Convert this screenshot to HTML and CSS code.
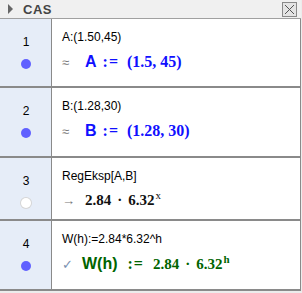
FILE: index.html
```html
<!DOCTYPE html>
<html lang="nb">
<head>
    <meta charset="utf-8">
    <link rel="stylesheet" href="styles.css">
</head>
<body>
<div class="view">
  <div class="titlebar">
    <span class="tri"></span>
    <span class="title">CAS</span>
    <span class="close">
      <svg width="15" height="15" viewBox="0 0 15 15"><rect x="0.5" y="0.5" width="14" height="14" fill="#e4e4e4" stroke="#8a8a8a"/><path d="M3 3L12 12M12 3L3 12" stroke="#555" stroke-width="1"/></svg>
    </span>
  </div>
  <div class="rows">
    <div class="row r1">
      <div class="head"><span class="num">1</span><span class="dot"></span></div>
      <div class="cell">
        <div class="input">A:(1.50,45)</div>
        <div class="output"><span class="sym">≈</span><span class="math blue"><span class="var">A</span><span class="def">:=</span>(1.5, 45)</span></div>
      </div>
    </div>
    <div class="row r2">
      <div class="head"><span class="num">2</span><span class="dot"></span></div>
      <div class="cell">
        <div class="input">B:(1.28,30)</div>
        <div class="output"><span class="sym">≈</span><span class="math blue"><span class="var">B</span><span class="def">:=</span>(1.28, 30)</span></div>
      </div>
    </div>
    <div class="row r3">
      <div class="head"><span class="num">3</span><span class="dot off"></span></div>
      <div class="cell">
        <div class="input">RegEksp[A,B]</div>
        <div class="output"><span class="sym">→</span><span class="math black small">2.84<span class="times">·</span>6.32<sup>x</sup></span></div>
      </div>
    </div>
    <div class="row r4">
      <div class="head"><span class="num">4</span><span class="dot"></span></div>
      <div class="cell">
        <div class="input">W(h):=2.84*6.32^h</div>
        <div class="output"><span class="sym check">✓</span><span class="math green small"><span class="var wide">W(h)</span><span class="def">:=</span>2.84<span class="times">·</span>6.32<sup>h</sup></span></div>
      </div>
    </div>
  </div>
</div>
</body>
</html>
```
FILE: styles.css
```css
html, body { margin: 0; padding: 0; }
body {
    width: 302px;
    height: 293px;
    overflow: hidden;
    background: #ececec;
    font-family: "Liberation Sans", Arial, sans-serif;
}
.view { width: 301px; }

.titlebar {
    height: 18px;
    border-bottom: 1px solid #a0a0a0;
    background: #f0f0f0;
    display: flex;
    align-items: center;
}
.tri {
    width: 0; height: 0;
    margin-left: 8px;
    border-top: 5px solid transparent;
    border-bottom: 5px solid transparent;
    border-left: 5px solid #666;
}
.title {
    margin-left: 10px;
    font-size: 13px;
    font-weight: bold;
    color: #444;
    letter-spacing: 0.5px;
}
.close {
    margin-left: auto;
    margin-right: 4px;
    height: 15px;
}
.close svg { display: block; }

.rows { background: #fff; border-right: 1px solid #8a8a8a; }
.row {
    display: flex;
    border-bottom: 2px solid #8a8a8a;
}
.r1 { height: 67px; }
.r2 { height: 68px; }
.r3 { height: 61px; }
.r4 { height: 68px; }

.head {
    width: 51px;
    flex: none;
    background: #e6edf8;
    border-right: 1px solid #8a8a8a;
    display: flex;
    flex-direction: column;
    align-items: center;
}
.num {
    margin-top: 16px;
    font-size: 12px;
    color: #000;
    margin-left: 1px;
}
.dot {
    margin-top: 10px;
    width: 10px; height: 10px;
    border-radius: 50%;
    background: #6060ff;
}
.dot.off {
    background: #fff;
    box-shadow: 0 0 0 1px #d6d6d6;
}

.cell { padding-left: 10px; }
.input {
    margin-top: 11px;
    font-size: 12px;
    color: #000;
}
.output {
    margin-top: 9px;
    display: flex;
    align-items: baseline;
}
.sym {
    width: 23px;
    font-size: 13px;
    color: #777;
}
.check { color: #7a8fb0; width: 20px; }
.math {
    font-family: "Liberation Serif", "Times New Roman", serif;
    font-weight: bold;
    font-size: 16px;
    white-space: pre;
}
.math.small { font-size: 15px; }
.var {
    font-family: "Liberation Sans", Arial, sans-serif;
    font-size: 16px;
}
.def {
    margin: 0 8px 0 6px;
    letter-spacing: 1px;
    font-size: 16px;
}
.wide + .def { margin: 0 9px 0 10px; }
.times { margin: 0 6px; }
.math sup { font-size: 11px; font-weight: normal; line-height: 0; margin-left: 1px; }
.green sup { font-weight: bold; }
.blue { color: #1010ff; }
.black { color: #111; }
.green { color: #006400; }
```
